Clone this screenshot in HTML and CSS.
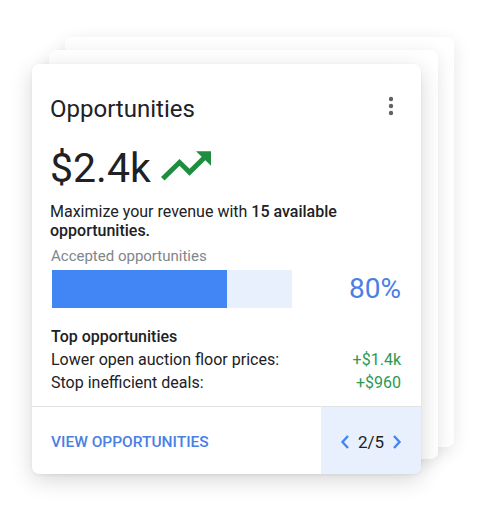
FILE: index.html
```html
<!DOCTYPE html>
<html>
<head>
<meta charset="utf-8">
<link rel="stylesheet" href="styles.css">
</head>
<body>
<div class="stage">
  <div class="ghost ghost-back"></div>
  <div class="ghost ghost-mid"></div>
  <div class="card">
    <div class="card-body">
      <div class="header">
        <h1 class="title">Opportunities</h1>
        <svg class="kebab" width="8" height="20" viewBox="0 0 8 20"><circle cx="4" cy="3" r="2.2" fill="#5f6368"/><circle cx="4" cy="10" r="2.2" fill="#5f6368"/><circle cx="4" cy="17" r="2.2" fill="#5f6368"/></svg>
      </div>
      <div class="amount-row">
        <span class="amount">$2.4k</span>
        <svg class="trend" width="50" height="31" viewBox="2 5.5 20 12.7" preserveAspectRatio="none"><path d="M16 6l2.29 2.29-4.88 4.88-4-4L2 16.59 3.41 18l6-6 4 4 6.3-6.29L22 12V6z" fill="#1e8e3e"/></svg>
      </div>
      <p class="desc">Maximize your revenue with <b>15 available</b> <b>opportunities.</b></p>
      <div class="label">Accepted opportunities</div>
      <div class="progress-row">
        <div class="track"><div class="fill" style="width:73%"></div></div>
        <span class="pct">80%</span>
      </div>
      <div class="top-title">Top opportunities</div>
      <div class="row"><span>Lower open auction floor prices:</span><span class="gain">+$1.4k</span></div>
      <div class="row"><span>Stop inefficient deals:</span><span class="gain">+$960</span></div>
    </div>
    <div class="footer">
      <a class="view">VIEW OPPORTUNITIES</a>
      <div class="pager">
        <svg width="10" height="16" viewBox="0 0 10 16"><polyline points="8,2 2.5,8 8,14" fill="none" stroke="#4285f4" stroke-width="2.4"/></svg>
        <span class="page">2/5</span>
        <svg width="10" height="16" viewBox="0 0 10 16"><polyline points="2,2 7.5,8 2,14" fill="none" stroke="#4285f4" stroke-width="2.4"/></svg>
      </div>
    </div>
  </div>
</div>
</body>
</html>
```
FILE: styles.css
```css
* { box-sizing: border-box; }
html, body { margin: 0; padding: 0; background: #fff; }
body { font-family: Roboto, "Liberation Sans", sans-serif; color: #202124; }
.stage { position: relative; padding: 64px 0 0 32px; width: 486px; height: 510px; }
.ghost {
  position: absolute; width: 389px; height: 410px; background: #fff; border-radius: 7px;
  box-shadow: 0 4px 18px rgba(0,0,0,0.10);
}
.ghost-back { left: 65px; top: 37px; }
.ghost-mid { left: 49px; top: 50px; height: 409px; }
.card {
  position: relative; width: 389px; height: 410px; background: #fff; border-radius: 7px;
  box-shadow: 0 6px 22px rgba(0,0,0,0.16), 0 1px 3px rgba(0,0,0,0.06);
  display: flex; flex-direction: column; overflow: hidden;
}
.card-body { padding: 31px 20px 0 18px; flex: 1; }
.header { display: flex; justify-content: space-between; align-items: center; height: 28px; }
.title { margin: 0; font-size: 24px; font-weight: 400; line-height: 28px; color: #202124; }
.kebab { margin-right: 6px; margin-top: -6px; }
.amount-row { display: flex; align-items: center; margin-top: 21px; height: 48px; }
.amount { font-size: 41px; line-height: 48px; color: #202124; }
.trend { margin-left: 10px; margin-top: -5px; }
.desc { margin: 10px 0 0; font-size: 16px; line-height: 19px; color: #202124; }
.desc b { font-weight: 500; }
.label { margin-top: 7px; font-size: 15px; line-height: 18px; color: #80868b; padding-left: 1px; }
.progress-row { display: flex; align-items: center; justify-content: space-between; margin-top: 5px; padding-left: 2px; }
.track { width: 240px; height: 38px; background: #e8f0fe; }
.fill { height: 100%; background: #4285f4; }
.pct { font-size: 28px; color: #4a80e3; line-height: 38px; }
.top-title { margin-top: 17px; font-size: 16px; font-weight: 500; line-height: 23px; padding-left: 1px; }
.row { display: flex; justify-content: space-between; font-size: 16px; line-height: 23px; padding-left: 1px; color: #202124; }
.gain { color: #2a9a55; }
.footer { display: flex; height: 68px; border-top: 1px solid #e3e3e3; align-items: stretch; }
.view { flex: 1; display: flex; align-items: center; padding-left: 19px; font-size: 15.5px; font-weight: 500; color: #4a80e3; padding-top: 2px; }
.pager { width: 100px; background: #e8f0fe; display: flex; align-items: center; justify-content: center; gap: 8px; padding-top: 2px; }
.page { font-size: 17px; color: #202124; }
```
